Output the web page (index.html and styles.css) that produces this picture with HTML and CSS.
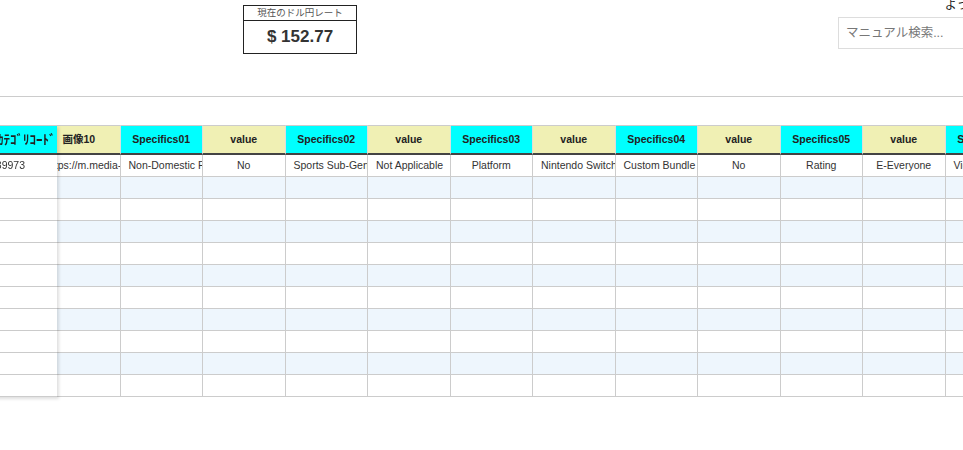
FILE: index.html
```html
<!DOCTYPE html>
<html lang="ja">
  <head>
    <meta charset="utf-8">
    <title>出品データ編集</title>
    <link rel="stylesheet" href="styles.css">
  </head>

  <body>
    <div class="app">
      <div class="page">
        <header class="topbar">
          <div class="rate">
            <div class="rate-label">現在のドル円レート</div>
            <div class="rate-value">$ 152.77</div>
          </div>
          <div class="user">
            <div class="welcome">ようこそ ゲスト様</div>
            <input type="text" class="search" placeholder="マニュアル検索...">
          </div>
        </header>

        <div class="sheet">
          <table class="grid">
            <thead><tr class="head"></tr></thead>
            <tbody class="rows"></tbody>
          </table>
        </div>
      </div>
    </div>

    <script>
// 列の定義（先頭のカテゴリコードは固定列）
        const columns = [
            { name: 'SKU', value: 'NSW-240118' },
            { name: '商品名', value: 'Nintendo Switch Sports Bundle' },
            { name: '価格', value: '59.99' },
            { name: '数量', value: '1' },
            { name: '状態', value: 'New' }
        ];
        for (let i = 1; i <= 10; i++) {
            columns.push({ name: '画像' + i, value: 'https://m.media-amazon.com/images/I/71Kx' + i + '.jpg' });
        }

        const specifics = [
            ['Non-Domestic Product', 'No'],
            ['Sports Sub-Genre', 'Not Applicable'],
            ['Platform', 'Nintendo Switch'],
            ['Custom Bundle', 'No'],
            ['Rating', 'E-Everyone'],
            ['Video Game Series', 'Nintendo Switch Sports'],
            ['Genre', 'Sports'],
            ['Region Code', 'Region Free'],
            ['Publisher', 'Nintendo'],
            ['Game Name', 'Nintendo Switch Sports']
        ];
        specifics.forEach(function (pair, i) {
            const num = (i < 9 ? '0' : '') + (i + 1);
            columns.push({ name: 'Specifics' + num, value: pair[0] });
            columns.push({ name: 'value', value: pair[1] });
        });

        const head = document.querySelector('.head');
        const rows = document.querySelector('.rows');
        const table = document.querySelector('.grid');

        let th = document.createElement('th');
        th.className = 'key';
        th.textContent = 'ｶﾃｺﾞﾘｺｰﾄﾞ';
        head.appendChild(th);

        columns.forEach(function (col, i) {
            const cell = document.createElement('th');
            cell.className = i % 2 === 0 ? 'khaki' : 'aqua';
            if (col.name === '画像10') cell.classList.add('img10');
            cell.textContent = col.name;
            head.appendChild(cell);
        });

// 1行目にデータ、残りは空行
        for (let r = 0; r < 11; r++) {
            const tr = document.createElement('tr');
            if (r % 2 === 1) tr.className = 'stripe';
            const key = document.createElement('td');
            key.className = 'key';
            key.textContent = r === 0 ? '139973' : '';
            tr.appendChild(key);
            columns.forEach(function (col) {
                const td = document.createElement('td');
                td.textContent = r === 0 ? col.value : '';
                tr.appendChild(td);
            });
            rows.appendChild(tr);
        }

        table.style.width = (68 + columns.length * 82.5) + 'px';

// 前回の表示位置（画像10 付近）までスクロール
        const app = document.querySelector('.app');
        const sheet = document.querySelector('.sheet');
        const img10 = document.querySelector('.img10');
        sheet.scrollLeft = img10.getBoundingClientRect().left - sheet.getBoundingClientRect().left - 49;
        app.scrollLeft = 11;
    </script>
  </body>
</html>
```

FILE: styles.css
```css
  html {
    font-family: "Liberation Sans", "Noto Sans CJK JP", sans-serif;
  }

  body {
    margin: 0;
    color: #333;
    background-color: #fff;
  }

  .app {
    width: 100vw;
    height: 100vh;
    overflow: hidden;
  }

  .page {
    width: 1075px;
  }

  .topbar {
    display: flex;
    align-items: flex-start;
    height: 96px;
    padding-right: 20px;
    border-bottom: 1px solid #ccc;
  }

  .rate {
    width: 112px;
    margin: 5px 0 0 254px;
    border: 1px solid #222;
    text-align: center;
  }

  .rate-label {
    font-size: 9.5px;
    line-height: 14px;
    color: #555;
    border-bottom: 1px solid #222;
  }

  .rate-value {
    font-size: 17px;
    font-weight: bold;
    line-height: 32px;
    color: #333;
  }

  .user {
    width: 206px;
    margin-left: auto;
  }

  .welcome {
    margin-top: -2px;
    font-size: 12px;
    line-height: 14px;
    text-align: right;
    color: #222;
  }

  .search {
    display: block;
    box-sizing: border-box;
    width: 100%;
    height: 32px;
    margin-top: 5px;
    padding: 0 7px;
    border: 1px solid #ddd;
    font-family: "Liberation Sans", "Noto Sans CJK JP", sans-serif;
    font-size: 12.5px;
    color: #333;
  }

  .search::placeholder {
    color: #777;
  }

  .sheet {
    margin-top: 28px;
    padding-bottom: 6px;
    overflow: hidden;
  }

  .grid {
    table-layout: fixed;
    border-collapse: separate;
    border-spacing: 0;
  }

  .grid th,
  .grid td {
    box-sizing: border-box;
    width: 82.5px;
    padding: 0 8px;
    font-size: 10.5px;
    white-space: nowrap;
    overflow: hidden;
    text-align: center;
  }

  .grid th {
    height: 30px;
    line-height: 27px;
    font-weight: bold;
    color: #222;
    border-top: 1px solid #ccc;
    border-right: 1px solid #ddd;
    border-bottom: 2px solid #444;
  }

  .grid td {
    height: 22px;
    line-height: 21px;
    color: #333;
    background-color: #fff;
    border-right: 1px solid #ccc;
    border-bottom: 1px solid #ccc;
  }

  .grid .aqua {
    background-color: #00ffff;
  }

  .grid .khaki {
    background-color: #f0f0b4;
  }

  .grid .stripe td {
    background-color: #eef6fd;
  }

  .grid .key {
    position: sticky;
    left: 0;
    z-index: 2;
    width: 68px;
    border-right: none;
    box-shadow: 2px 2px 3px rgba(0, 0, 0, .13);
  }

  .grid th.key {
    font-size: 13px;
    background-color: #00ffff;
  }

  .grid td.key,
  .grid .stripe .key {
    padding-left: 1px;
    text-align: left;
    background-color: #fff;
  }
```
